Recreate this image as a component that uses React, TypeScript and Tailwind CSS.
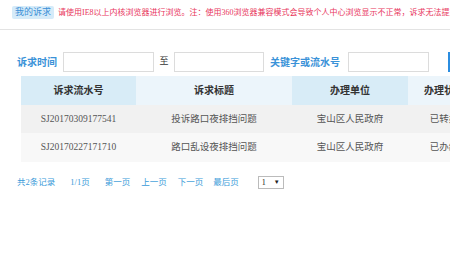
import React from "react";

const font = { fontFamily: '"Liberation Serif", "Noto Sans CJK SC", sans-serif' };

export default function App() {
  const rows = [
    { id: "SJ20170309177541", title: "投诉路口夜排挡问题", unit: "宝山区人民政府", status: "已转办", bg: "bg-[#f1f1f1]" },
    { id: "SJ20170227171710", title: "路口乱设夜排挡问题", unit: "宝山区人民政府", status: "已办结", bg: "bg-[#f8f8f8]" },
  ];
  return (
    <div className="w-[450px] h-[262px] overflow-hidden bg-white" style={font}>
      <div className="h-[30px] border-b border-[#e3e3e3] flex items-center pl-[12px] pb-[4px] whitespace-nowrap">
        <span className="shrink-0 bg-[#d5ebf9] text-[#3b8fd6] text-[9px] leading-[13px] px-[3px] rounded-[2px]">我的诉求</span>
        <span className="shrink-0 ml-[4px] text-[#e8365c] text-[8px] leading-[13px]">
          请使用IE8以上内核浏览器进行浏览。注：使用360浏览器兼容模式会导致个人中心浏览显示不正常，诉求无法提交。
        </span>
      </div>
      <div className="flex items-center mt-[22px] pl-[17px] whitespace-nowrap">
        <span className="shrink-0 text-[10px] font-bold text-[#3a92d8] w-[46px]">诉求时间</span>
        <div className="shrink-0 w-[91px] h-[20px] border border-[#dcdcdc] bg-white" />
        <span className="shrink-0 w-[20px] text-center text-[9px] text-[#333]">至</span>
        <div className="shrink-0 w-[90px] h-[20px] border border-[#dcdcdc] bg-white" />
        <span className="shrink-0 ml-[6px] w-[78px] text-[10px] font-bold text-[#3a92d8]">关键字或流水号</span>
        <div className="shrink-0 w-[81px] h-[20px] border border-[#dcdcdc] bg-white" />
        <div className="shrink-0 ml-[19px] w-[40px] h-[20px] bg-[#2b8de0]" />
      </div>
      <div className="mt-[4px] ml-[21px] w-[600px]">
        <div className="flex h-[29px] text-[10px] font-bold text-[#333]">
          <div className="shrink-0 w-[115px] bg-[#d8ecf7] flex items-center justify-center">诉求流水号</div>
          <div className="shrink-0 w-[156px] bg-[#ecf5fb] flex items-center justify-center">诉求标题</div>
          <div className="shrink-0 w-[116px] bg-[#d8ecf7] flex items-center justify-center">办理单位</div>
          <div className="shrink-0 w-[72px] bg-[#ecf5fb] flex items-center justify-center">办理状态</div>
        </div>
        {rows.map((r, i) => (
          <div key={r.id} className={`flex ${i === 0 ? "h-[28px]" : "h-[29px]"} ${r.bg} text-[9.5px] text-[#555]`}>
            <div className="shrink-0 w-[115px] flex items-center justify-center">{r.id}</div>
            <div className="shrink-0 w-[156px] flex items-center justify-center">{r.title}</div>
            <div className="shrink-0 w-[116px] flex items-center justify-center">{r.unit}</div>
            <div className="shrink-0 w-[72px] flex items-center justify-center">{r.status}</div>
          </div>
        ))}
      </div>
      <div className="flex items-center mt-[14px] pl-[17px] text-[8.5px] text-[#3a9ad9] whitespace-nowrap">
        <span>共2条记录</span>
        <span className="ml-[15px]">1/1页</span>
        <span className="ml-[15px]">第一页</span>
        <span className="ml-[11px]">上一页</span>
        <span className="ml-[11px]">下一页</span>
        <span className="ml-[10px]">最后页</span>
        <div className="ml-[19px] w-[26px] h-[13px] border border-[#bbb] flex items-center justify-between px-[3px] text-[#222] text-[8px]">
          <span>1</span>
          <span className="text-[6px]">▼</span>
        </div>
      </div>
    </div>
  );
}
